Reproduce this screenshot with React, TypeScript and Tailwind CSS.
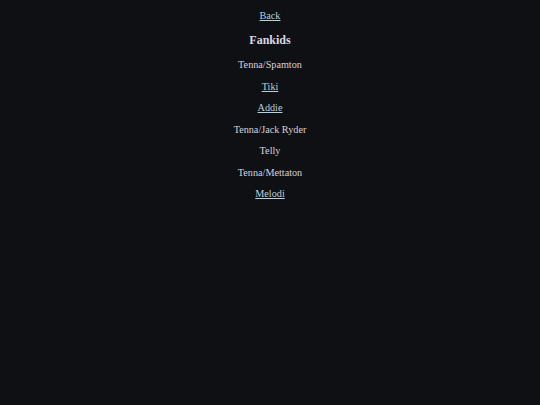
export default function App() {
  const items: { label: string; link: boolean }[] = [
    { label: "Tenna/Spamton", link: false },
    { label: "Tiki", link: true },
    { label: "Addie", link: true },
    { label: "Tenna/Jack Ryder", link: false },
    { label: "Telly", link: false },
    { label: "Tenna/Mettaton", link: false },
    { label: "Melodi", link: true },
  ];
  return (
    <div className="min-h-[405px] w-full bg-[#0f1014] text-[#d6d0de] text-center text-[10.2px] leading-[12px] [font-family:'Liberation_Serif',serif]">
      <div className="pt-[10px] flex flex-col items-center">
        <a href="#" className="underline text-[#b4d2de]">Back</a>
        <h1 className="mt-[11px] font-bold text-[12px] leading-[14px] text-[#dcd6e4]">Fankids</h1>
        <div className="mt-[12px] flex flex-col items-center gap-[9.5px]">
          {items.map((it) =>
            it.link ? (
              <a key={it.label} href="#" className="underline text-[#b4d2de]">{it.label}</a>
            ) : (
              <p key={it.label}>{it.label}</p>
            )
          )}
        </div>
      </div>
    </div>
  );
}
